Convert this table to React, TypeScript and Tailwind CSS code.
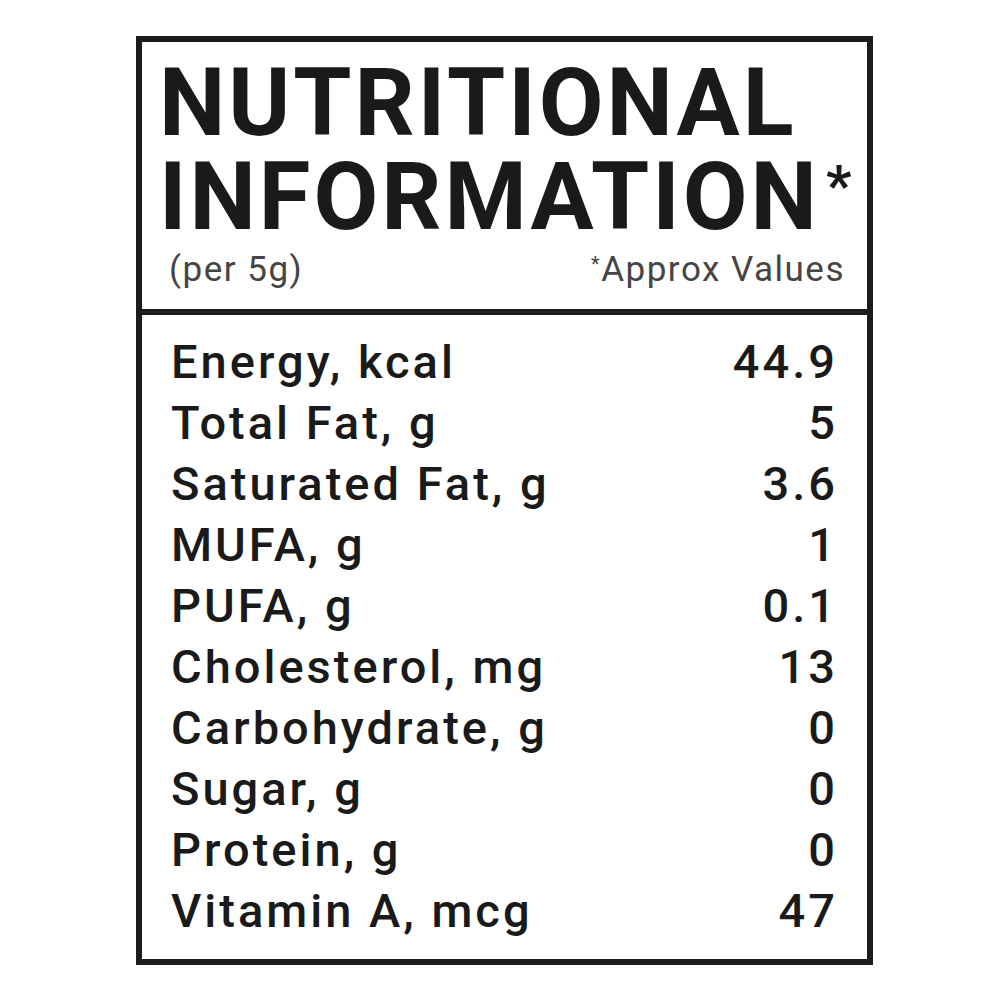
export default function App() {
  const rows: [string, string][] = [
    ['Energy, kcal', '44.9'],
    ['Total Fat, g', '5'],
    ['Saturated Fat, g', '3.6'],
    ['MUFA, g', '1'],
    ['PUFA, g', '0.1'],
    ['Cholesterol, mg', '13'],
    ['Carbohydrate, g', '0'],
    ['Sugar, g', '0'],
    ['Protein, g', '0'],
    ['Vitamin A, mcg', '47'],
  ];

  return (
    <div className="w-[1000px] h-[1000px] bg-white pt-[36px] pl-[136px] font-['Roboto',sans-serif]">
      <div className="w-[737px] border-[6px] border-[#1c1c1c]">
        <div className="pl-[17px] pr-[22px] pt-[14px] pb-[18px]">
          <h1 className="text-[94px] leading-[94px] font-bold text-[#1a1a1a] tracking-[3px]">
            NUTRITIONAL
            <br />
            INFORMATION
            <span className="relative top-[8px] ml-[6px] text-[56px] align-top leading-none">*</span>
          </h1>
          <div className="flex justify-between items-end text-[35px] leading-[42px] text-[#454545] tracking-[1.5px] mt-[5px]">
            <span className="pl-[10px]">(per 5g)</span>
            <span>
              <span className="relative -top-[10px] text-[20px] leading-none">*</span>Approx Values
            </span>
          </div>
        </div>
        <div className="border-t-[6px] border-[#1c1c1c] pl-[29px] pr-[32px] pt-[16px] pb-[18px]">
          {rows.map(([label, value]) => (
            <div key={label} className="flex justify-between text-[47px] leading-[61px] font-medium text-[#1a1a1a] tracking-[3px]">
              <span>{label}</span>
              <span className="-mr-[3px]">{value}</span>
            </div>
          ))}
        </div>
      </div>
    </div>
  );
}
